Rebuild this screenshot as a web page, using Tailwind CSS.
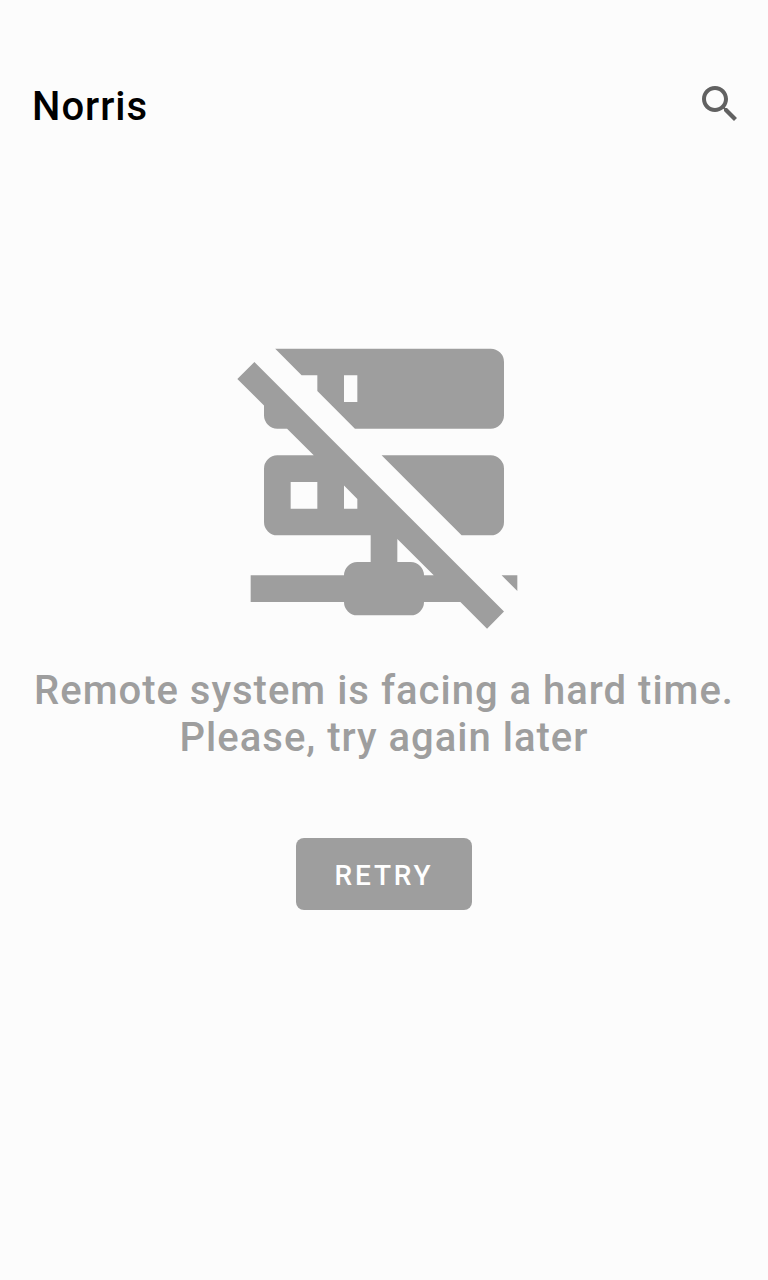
<!DOCTYPE html>
<html lang="en">
<head>
<meta charset="utf-8">
<meta name="viewport" content="width=device-width, initial-scale=1">
<title>Norris</title>
<script src="https://cdn.jsdelivr.net/npm/@tailwindcss/browser@4"></script>
</head>
<body class="flex min-h-screen flex-col bg-[#fcfcfc] font-['Roboto',sans-serif] font-medium">
  <header class="mt-12 flex h-28 items-center justify-between px-6 pl-8">
    <h1 class="pt-1 text-[40px] leading-[47px] font-medium tracking-wide text-black">Norris</h1>
    <button type="button" aria-label="Search" class="text-[#616161]">
      <svg class="size-12" viewBox="0 0 24 24" fill="currentColor" aria-hidden="true"><path d="M15.5 14h-.79l-.28-.27C15.41 12.59 16 11.11 16 9.5 16 5.91 13.09 3 9.5 3S3 5.91 3 9.5 5.91 16 9.5 16c1.61 0 3.09-.59 4.23-1.57l.27.28v.79l5 4.99L20.49 19l-4.99-5zm-6 0C7.01 14 5 11.99 5 9.5S7.01 5 9.5 5 14 7.01 14 9.5 11.99 14 9.5 14z"/></svg>
    </button>
  </header>
  <main class="flex flex-col items-center px-4 pt-[162px] text-center">
    <svg class="size-80 text-[#9e9e9e]" viewBox="0 0 24 24" fill="currentColor" aria-hidden="true"><path d="M13,18H14A1,1 0 0,1 15,19H15.73L13,16.27V18M22,19V20.18L20.82,19H22M21,21.72L19.73,23L17.73,21H15A1,1 0 0,1 14,22H10A1,1 0 0,1 9,21H2V19H9A1,1 0 0,1 10,18H11V16H4A1,1 0 0,1 3,15V11A1,1 0 0,1 4,10H6.73L4.73,8H4A1,1 0 0,1 3,7V6.27L1,4.27L2.28,3L21,21.72M4,2H20A1,1 0 0,1 21,3V7A1,1 0 0,1 20,8H9.82L7,5.18V4H5.82L3.84,2H4M20,10A1,1 0 0,1 21,11V15A1,1 0 0,1 20,16H17.82L11.82,10H20M9,6H10V4H9V6M9,14H10V13.27L9,12.27V14M5,12V14H7V12H5Z"/></svg>
    <p class="mt-[25px] text-[40px] leading-[47px] tracking-wide text-[#9e9e9e]">Remote system is facing a hard time.<br>Please, try again later</p>
    <button type="button" class="mt-[77px] h-[72px] w-44 rounded-lg bg-[#9e9e9e] pt-1 text-[28px] leading-8 font-medium tracking-widest text-white">RETRY</button>
  </main>
</body>
</html>
